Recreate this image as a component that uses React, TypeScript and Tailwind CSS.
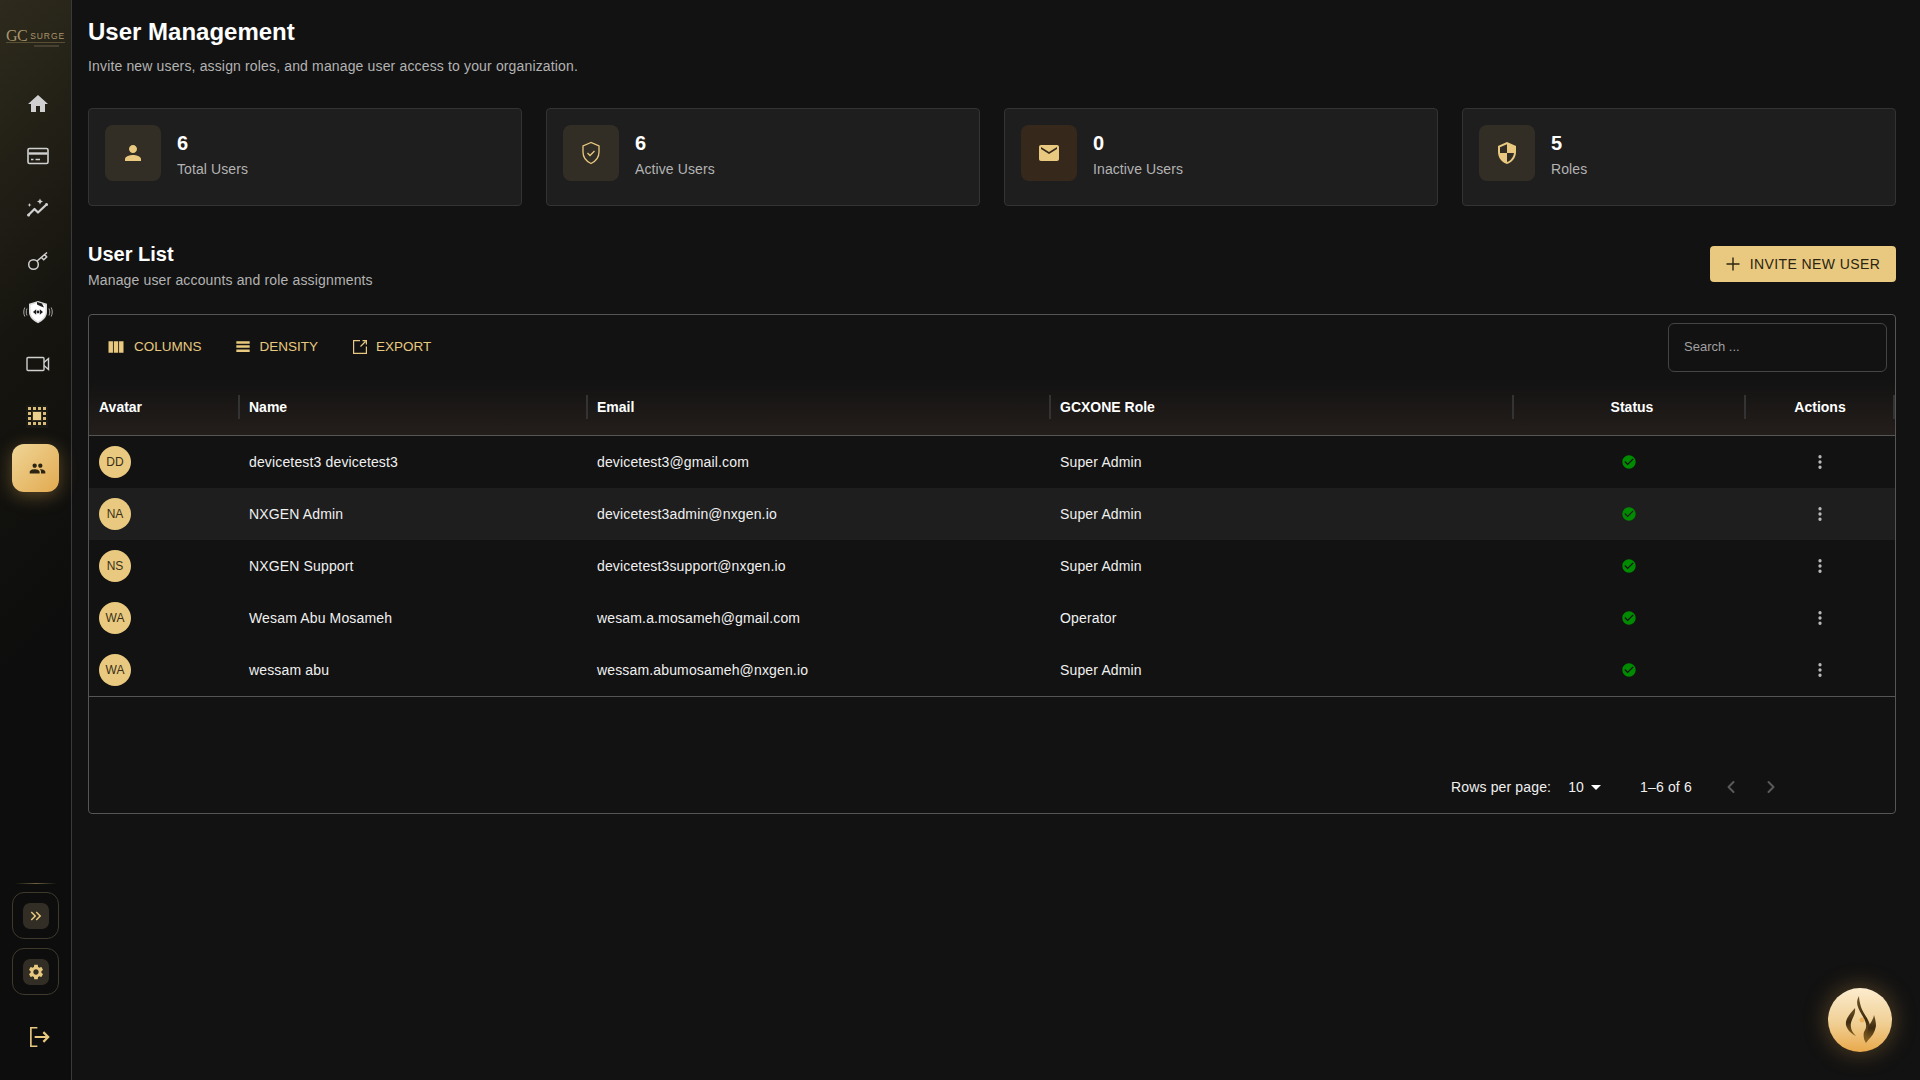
import { ChevronLeft, ChevronRight, MoreVertical } from 'lucide-react';

const users = [
  { initials: 'DD', name: 'devicetest3 devicetest3', email: 'devicetest3@gmail.com', role: 'Super Admin' },
  { initials: 'NA', name: 'NXGEN Admin', email: 'devicetest3admin@nxgen.io', role: 'Super Admin' },
  { initials: 'NS', name: 'NXGEN Support', email: 'devicetest3support@nxgen.io', role: 'Super Admin' },
  { initials: 'WA', name: 'Wesam Abu Mosameh', email: 'wesam.a.mosameh@gmail.com', role: 'Operator' },
  { initials: 'WA', name: 'wessam abu', email: 'wessam.abumosameh@nxgen.io', role: 'Super Admin' },
];

const Glyph = ({ d, className }: { d: string; className: string }) => (
  <svg viewBox="0 0 24 24" fill="currentColor" className={className}>
    <path d={d} />
  </svg>
);

const ICONS = {
  home: 'M10 20v-6h4v6h5v-8h3L12 3 2 12h3v8z',
  people: 'M16 11c1.66 0 2.99-1.34 2.99-3S17.66 5 16 5c-1.66 0-3 1.34-3 3s1.34 3 3 3zm-8 0c1.66 0 2.99-1.34 2.99-3S9.66 5 8 5C6.34 5 5 6.34 5 8s1.34 3 3 3zm0 2c-2.33 0-7 1.17-7 3.5V19h14v-2.5c0-2.33-4.67-3.5-7-3.5zm8 0c-.29 0-.62.02-.97.05 1.16.84 1.97 1.97 1.97 3.45V19h6v-2.5c0-2.33-4.67-3.5-7-3.5z',
  doubleArrow: 'M6.41 6 5 7.41 9.58 12 5 16.59 6.41 18l6-6zM13 6l-1.41 1.41L16.17 12l-4.58 4.59L13 18l6-6z',
  settings: 'M19.14 12.94c.04-.3.06-.61.06-.94 0-.32-.02-.64-.07-.94l2.03-1.58c.18-.14.23-.41.12-.61l-1.92-3.32c-.12-.22-.37-.29-.59-.22l-2.39.96c-.5-.38-1.03-.7-1.62-.94l-.36-2.54c-.04-.24-.24-.41-.48-.41h-3.84c-.24 0-.43.17-.47.41l-.36 2.54c-.59.24-1.13.57-1.62.94l-2.39-.96c-.22-.08-.47 0-.59.22L2.74 8.87c-.12.21-.08.47.12.61l2.03 1.58c-.05.3-.09.63-.09.94s.02.64.07.94l-2.03 1.58c-.18.14-.23.41-.12.61l1.92 3.32c.12.22.37.29.59.22l2.39-.96c.5.38 1.03.7 1.62.94l.36 2.54c.05.24.24.41.48.41h3.84c.24 0 .44-.17.47-.41l.36-2.54c.59-.24 1.13-.56 1.62-.94l2.39.96c.22.08.47 0 .59-.22l1.92-3.32c.12-.22.07-.47-.12-.61l-2.01-1.58zM12 15.6c-1.98 0-3.6-1.62-3.6-3.6s1.62-3.6 3.6-3.6 3.6 1.62 3.6 3.6-1.62 3.6-3.6 3.6z',
  person: 'M12 12c2.21 0 4-1.79 4-4s-1.79-4-4-4-4 1.79-4 4 1.79 4 4 4zm0 2c-2.67 0-8 1.34-8 4v2h16v-2c0-2.66-5.33-4-8-4z',
  mail: 'M20 4H4c-1.1 0-1.99.9-1.99 2L2 18c0 1.1.9 2 2 2h16c1.1 0 2-.9 2-2V6c0-1.1-.9-2-2-2zm0 4-8 5-8-5V6l8 5 8-5v2z',
  security: 'M12 1 3 5v6c0 5.55 3.84 10.74 9 12 5.16-1.26 9-6.45 9-12V5l-9-4zm0 10.99h7c-.53 4.12-3.28 7.79-7 8.94V12H5V6.3l7-3.11v8.8z',
  columns: 'M14.67 5v14H9.33V5h5.34zm1 14H21V5h-5.33v14zm-7.34 0V5H3v14h5.33z',
  density: 'M4 18v-3h16v3zm0-5v-3h16v3zm0-5V5h16v3z',
  check: 'M12 2C6.48 2 2 6.48 2 12s4.48 10 10 10 10-4.48 10-10S17.52 2 12 2zm-2 15-5-5 1.41-1.41L10 14.17l7.59-7.59L19 8l-9 9z',
};

const CardIcon = () => (
  <svg viewBox="0 0 24 24" fill="none" stroke="currentColor" strokeWidth="1.6" className="w-6 h-6">
    <rect x="2" y="4.5" width="20" height="15" rx="1.5" />
    <path d="M2.5 9.5h19" strokeWidth="2.4" />
    <path d="M5 15.5h2.5M9.5 15.5h4.5" />
  </svg>
);

const ChartIcon = () => (
  <svg viewBox="0 0 24 24" fill="currentColor" className="w-6 h-6">
    <path d="M2.5 19 8.500 13l3.500 3.500 8.500-8" fill="none" stroke="currentColor" strokeWidth="2.2" strokeLinecap="round" strokeLinejoin="round" />
    <circle cx="2.600" cy="19" r="1.500" />
    <circle cx="20.500" cy="8.500" r="1.500" />
    <path d="M14 2.500l.9 2.100 2.100.9-2.100.9-.9 2.100-.9-2.100-2.100-.9 2.100-.9zM3.500 7l.6 1.400 1.400.6-1.400.6-.6 1.400-.6-1.400-1.400-.6 1.400-.6z" />
  </svg>
);

const KeyIcon = () => (
  <svg viewBox="0 0 24 24" fill="none" stroke="currentColor" strokeWidth="1.500" className="w-6 h-6">
    <circle cx="7.500" cy="16.500" r="4.800" />
    <path d="M10.800 13.200 21 4.500M15.500 9.500l2.200 2.200 3-2.700-2-2.400" />
  </svg>
);

const ShieldBot = () => (
  <svg viewBox="0 0 30 24" className="w-[30px] h-6">
    <path d="M15 1l9 2.800v8.200c0 5.200-4.200 8.800-9 11.200-4.800-2.400-9-6-9-11.200V3.800z" fill="#dcdcdc" />
    <path d="M15 2.800l7.400 2.300v6.900c0 4.300-3.300 7.300-7.400 9.400-4.100-2.100-7.400-5.100-7.400-9.400V5.100z" fill="#fff" />
    <path d="M14 2l5 1.500 2 4-4-1.500-3-1.500zM10 12l3.200-2.700v5.400zM20 12l-3.200-2.700v5.400z" fill="#1c1c1c" />
    <circle cx="15" cy="12" r="1.400" fill="#1c1c1c" />
    <path d="M4 8.500c-1 2.300-1 4.700 0 7M1.800 7.500c-1.400 3-1.400 6 0 9M26 8.500c1 2.300 1 4.700 0 7M28.200 7.500c1.400 3 1.400 6 0 9" fill="none" stroke="#a8a8a8" strokeWidth="1" />
  </svg>
);

const VideoIcon = () => (
  <svg viewBox="0 0 24 16" fill="none" stroke="currentColor" strokeWidth="1.400" className="w-6 h-4">
    <rect x="1" y="1.500" width="17" height="13" rx="1" />
    <path d="M18 6.500 22.500 2.500v11L18 9.500" />
  </svg>
);

const GridIcon = () => (
  <div className="relative -ml-[2px] w-[22px] h-[23px] bg-[#1b1913] flex items-center justify-center">
    <div className="grid grid-cols-4 gap-[2px] w-[18px]">
      {Array.from({ length: 16 }).map((_, i) => (
        <span key={i} className="h-[3px] bg-[#d9bc76]" />
      ))}
    </div>
    <span className="absolute left-[7px] top-[7.500px] w-2 h-2 bg-[#edd08c] outline-[1.500px] outline-[#3a3222]" />
  </div>
);

const LogoutIcon = () => (
  <svg viewBox="0 0 24 24" fill="none" stroke="#e8c97f" strokeWidth="1.500" className="w-[26px] h-[26px]">
    <path d="M10.500 3.500H4.500v17h6" />
    <path d="M8 12h12.500M16 7.500l4.500 4.500-4.500 4.500" strokeWidth="2" />
  </svg>
);

const ExportIcon = () => (
  <svg viewBox="0 0 16 16" fill="none" stroke="currentColor" strokeWidth="1.200" className="w-4 h-4">
    <path d="M8 1.600H1.600v12.800h12.800V7.500" />
    <path d="M8.500 7.500 13.500 2.500M10.500 1.600h3.900v3.900" />
  </svg>
);

const Flame = () => (
  <svg viewBox="0 0 64 64" className="w-16 h-16">
    <defs>
      <linearGradient id="flame" x1="0" y1="0" x2="0" y2="1">
        <stop offset="0" stopColor="#6d5226" />
        <stop offset="0.5" stopColor="#3c2a10" />
        <stop offset="1" stopColor="#8a6423" />
      </linearGradient>
    </defs>
    <g fill="url(#flame)">
      <path d="M31 8C27 15 30 20 34 27C38 34 40 38 36 44C35 48 36 52 38 55C42 50 44 44 42 37C40 30 35 25 33 19C32 15 31 12 31 8Z" />
      <path d="M27 20C22 26 17 31 18 37C19 42 24 46 28 48C24 44 22 40 23 35C24 30 28 26 27 20Z" />
      <path d="M46 27C45 33 41 36 40 41C39 46 39 50 39 53C44 49 47 44 48 38C48 34 47 30 46 27Z" />
    </g>
    <circle cx="34" cy="32" r="2.500" fill="#e9a94b" opacity="0.8" />
  </svg>
);

const navIcons = [
  <Glyph key="home" d={ICONS.home} className="w-6 h-6" />,
  <CardIcon key="card" />,
  <ChartIcon key="chart" />,
  <KeyIcon key="key" />,
  <ShieldBot key="shield" />,
  <VideoIcon key="video" />,
  <GridIcon key="grid" />,
];

const stats = [
  { value: '6', label: 'Total Users', box: 'bg-[#332e25]', icon: <Glyph d={ICONS.person} className="w-6 h-6" /> },
  {
    value: '6',
    label: 'Active Users',
    box: 'bg-[#332e25]',
    icon: (
      <svg viewBox="0 0 24 24" fill="none" stroke="currentColor" strokeWidth="1.300" className="w-6 h-6">
        <path d="M12 1.500 4 5V11c0 5.200 3.300 9.300 8 11.500 4.700-2.200 8-6.300 8-11.500V5z" />
        <path d="M8.500 12l2.500 2.500 4.500-4.500" />
      </svg>
    ),
  },
  { value: '0', label: 'Inactive Users', box: 'bg-[#36291c]', icon: <Glyph d={ICONS.mail} className="w-6 h-6" /> },
  { value: '5', label: 'Roles', box: 'bg-[#332e25]', icon: <Glyph d={ICONS.security} className="w-6 h-6" /> },
];

const COLS = 'grid grid-cols-[150px_348px_463px_463px_232px_150px]';

const HeadCell = ({ children, center, last, shift }: { children: string; center?: boolean; last?: boolean; shift?: boolean }) => (
  <div className={`relative h-full flex items-center px-[10px] ${center ? 'justify-center' : ''}`}>
    <span className={shift ? 'ml-[6px]' : ''}>{children}</span>
    <span className={`absolute top-4 h-6 w-[2px] bg-[#333] ${last ? 'right-0' : '-right-[1px]'}`} />
  </div>
);

export default function App() {
  return (
    <div className="flex h-screen w-full overflow-hidden bg-[#121212] text-white font-['Liberation_Sans',Arial,sans-serif] relative">
      <aside className="w-[72px] shrink-0 h-full flex flex-col items-center border-r border-[#3a3a3a] bg-[linear-gradient(135deg,#2e2a1d_0%,#16150f_30%,#0d0d0d_60%,#0d0d0d_100%)]">
        <div className="h-[64px] w-full flex flex-col items-start justify-end pb-[17px] pl-[6px]">
          <div className="flex items-end leading-none text-[#a8966a] border-b border-[#6e6040]/70 pb-[1px]">
            <span className="font-['Liberation_Serif',serif] text-[16px] leading-[11px] -tracking-[0.5px]">GC</span>
            <span className="text-[8.500px] leading-[9px] tracking-[0.9px] ml-[3px]">SURGE</span>
          </div>
          <span className="ml-[28px] mt-[2px] h-[2px] w-[25px] bg-[#5b5340]/60" />
        </div>
        <nav className="flex flex-col items-center mt-[14px]">
          {navIcons.map((icon, i) => (
            <div key={i} className="h-[52px] w-[72px] pl-[5px] flex items-center justify-center text-[#d0d0d0]">
              {icon}
            </div>
          ))}
          <div className="mt-[2px] -ml-[1px] pl-[5px] w-[47px] h-[48px] rounded-[12px] bg-[linear-gradient(135deg,#efd596,#e2aa50)] shadow-[0_4px_18px_rgba(232,180,90,0.35)] flex items-center justify-center text-[#2c2413]">
            <Glyph d={ICONS.people} className="w-[17px] h-[17px]" />
          </div>
        </nav>
        <div className="mt-auto w-full flex flex-col items-center">
          <div className="w-[42px] h-px bg-[linear-gradient(90deg,transparent,#6e6040,transparent)] mb-[8px]" />
          <div className="w-[47px] h-[47px] rounded-[12px] border border-[#3f3a2c] flex items-center justify-center">
            <div className="w-[26px] h-[26px] rounded-[7px] bg-[#332e25] flex items-center justify-center text-[#e8c97f]">
              <Glyph d={ICONS.doubleArrow} className="w-[18px] h-[18px]" />
            </div>
          </div>
          <div className="mt-[9px] w-[47px] h-[47px] rounded-[12px] border border-[#3f3a2c] flex items-center justify-center">
            <div className="w-[26px] h-[26px] rounded-[7px] bg-[#332e25] flex items-center justify-center text-[#e8c97f]">
              <Glyph d={ICONS.settings} className="w-[18px] h-[18px]" />
            </div>
          </div>
          <div className="mt-[29px] mb-[30px] pl-[6px]">
            <LogoutIcon />
          </div>
        </div>
      </aside>

      <main className="flex-1 min-w-0 pl-4 pr-6 pt-[18px]">
        <h1 className="text-[24px] leading-[28px] font-bold">User Management</h1>
        <p className="mt-[10px] text-[14px] leading-[20px] tracking-[0.15px] text-[#b3b3b3]">
          Invite new users, assign roles, and manage user access to your organization.
        </p>

        <div className="mt-[32px] grid grid-cols-4 gap-6">
          {stats.map((s) => (
            <div key={s.label} className="h-[98px] rounded border border-[#333] bg-[#1e1e1e] px-4 pt-4 flex gap-4">
              <div className={`w-14 h-14 rounded-lg flex items-center justify-center text-[#e8c97f] ${s.box}`}>{s.icon}</div>
              <div>
                <div className="mt-[6px] text-[20px] leading-[24px] font-bold">{s.value}</div>
                <div className="mt-[4px] text-[14px] leading-[20px] tracking-[0.1px] text-[#b3b3b3]">{s.label}</div>
              </div>
            </div>
          ))}
        </div>

        <div className="mt-[35px] flex items-start justify-between">
          <div>
            <h2 className="text-[20px] leading-[26px] font-bold">User List</h2>
            <p className="mt-[3px] text-[14px] leading-[20px] tracking-[0.15px] text-[#b3b3b3]">Manage user accounts and role assignments</p>
          </div>
          <button className="mt-[5px] w-[186px] h-[36px] rounded bg-[#e8c97f] text-[#2b2412] text-[14px] tracking-[0.4px] flex items-center justify-center gap-[10px]">
            <svg viewBox="0 0 14 14" fill="none" stroke="currentColor" strokeWidth="1.400" className="w-[14px] h-[14px]">
              <path d="M7 .5v13M.5 7h13" />
            </svg>
            INVITE NEW USER
          </button>
        </div>

        <section className="mt-[24px] h-[500px] rounded border border-[#555] flex flex-col">
          <div className="h-[64px] shrink-0 flex items-center justify-between pl-[20px] pr-[8px] text-[#e8c97f]">
            <div className="flex items-center text-[13.500px] gap-[33px]">
              <span className="flex items-center gap-[8px]">
                <Glyph d={ICONS.columns} className="w-5 h-5 -ml-[3px]" />
                COLUMNS
              </span>
              <span className="flex items-center gap-[7px]">
                <Glyph d={ICONS.density} className="w-5 h-5 -ml-[2px]" />
                DENSITY
              </span>
              <span className="flex items-center gap-[8px] ml-[1px]">
                <ExportIcon />
                EXPORT
              </span>
            </div>
            <div className="w-[219px] h-[49px] rounded-md border border-[#444] flex items-center pl-[15px] text-[13px] text-[#a0a0a0]">
              Search ...
            </div>
          </div>

          <div className={`${COLS} h-[57px] shrink-0 items-center text-[14px] font-bold border-b border-[#555] bg-[linear-gradient(180deg,#121212,#241e1b)]`}>
            <HeadCell>Avatar</HeadCell>
            <HeadCell>Name</HeadCell>
            <HeadCell>Email</HeadCell>
            <HeadCell>GCXONE Role</HeadCell>
            <HeadCell center shift>Status</HeadCell>
            <HeadCell center last>Actions</HeadCell>
          </div>

          {users.map((u, i) => (
            <div key={u.email} className={`${COLS} h-[52px] shrink-0 items-center text-[14px] tracking-[0.15px] text-[#f0f0f0] ${i === 1 ? 'bg-[#1e1e1e]' : ''}`}>
              <div className="px-[10px]">
                <div className="w-8 h-8 rounded-full bg-[#e8c97f] text-[#3a3018] text-[12px] tracking-normal flex items-center justify-center">{u.initials}</div>
              </div>
              <div className="px-[10px]">{u.name}</div>
              <div className="px-[10px]">{u.email}</div>
              <div className="px-[10px]">{u.role}</div>
              <div className="flex justify-center">
                <Glyph d={ICONS.check} className="w-4 h-4 text-[#008a00]" />
              </div>
              <div className="flex justify-center">
                <MoreVertical className="w-[18px] h-[18px] text-[#bdbdbd]" strokeWidth={2.4} />
              </div>
            </div>
          ))}

          <div className="border-t border-[#555] flex-1 flex items-end pb-[12px] pl-[1362px] text-[14px] tracking-[0.15px] text-[#f0f0f0]">
            <div className="flex items-center h-[28px]">
              <span>Rows per page:</span>
              <span className="ml-[17px]">10</span>
              <span className="ml-[7px] w-0 h-0 border-x-[5px] border-x-transparent border-t-[5px] border-t-white" />
              <span className="ml-[39px]">1–6 of 6</span>
              <ChevronLeft className="ml-[29px] w-5 h-5 text-[#5a5a5a]" strokeWidth={2.4} />
              <ChevronRight className="ml-[20px] w-5 h-5 text-[#5a5a5a]" strokeWidth={2.4} />
            </div>
          </div>
        </section>
      </main>

      <div className="absolute right-[28px] bottom-[28px] w-16 h-16 rounded-full bg-[linear-gradient(180deg,#fcecce,#f0cf94_55%,#e9a94b)] shadow-[0_0_24px_rgba(233,169,75,0.35)]">
        <Flame />
      </div>
    </div>
  );
}
